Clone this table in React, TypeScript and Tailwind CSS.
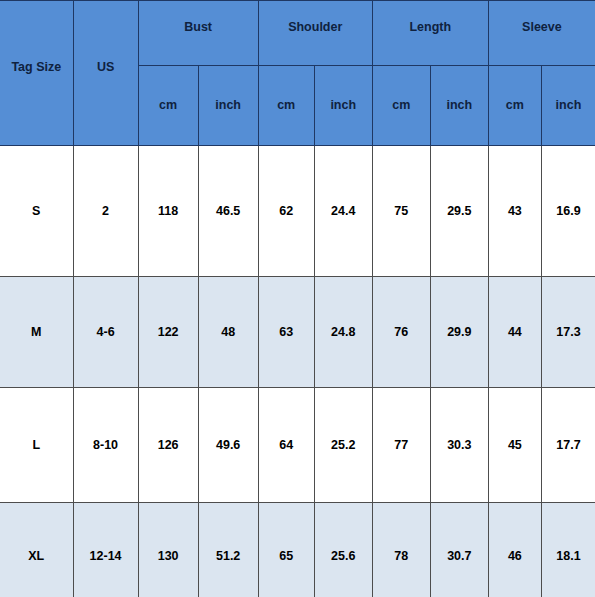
const rows = [
  { tag: 'S', us: '2', v: ['118', '46.5', '62', '24.4', '75', '29.5', '43', '16.9'], h: 'h-[131px]', pt: '' },
  { tag: 'M', us: '4-6', v: ['122', '48', '63', '24.8', '76', '29.9', '44', '17.3'], h: 'h-[111px]', pt: '' },
  { tag: 'L', us: '8-10', v: ['126', '49.6', '64', '25.2', '77', '30.3', '45', '17.7'], h: 'h-[115px]', pt: '' },
  { tag: 'XL', us: '12-14', v: ['130', '51.2', '65', '25.6', '78', '30.7', '46', '18.1'], h: 'h-[95px]', pt: 'pt-[12px]' },
]

const widths = ['w-[73px]', 'w-[65px]', 'w-[60px]', 'w-[60px]', 'w-[56px]', 'w-[58px]', 'w-[58px]', 'w-[58px]', 'w-[53px]', 'w-[54px]']
const groups = ['Bust', 'Shoulder', 'Length', 'Sleeve']

export default function App() {
  const head = 'border border-[#1f3864] bg-[#558ed5] text-[#0f2240] text-center align-middle'
  const cell = 'border border-[#4d4d4d] text-center align-middle text-black'

  return (
    <div className="w-[595px] h-[597px] overflow-hidden bg-white font-['Liberation_Sans',Arial,sans-serif] text-[12.5px] font-bold">
      <table className="border-collapse table-fixed w-[596px] border-t border-t-[#5a5a5a]">
        <colgroup>
          {widths.map((w, i) => (
            <col key={i} className={w} />
          ))}
        </colgroup>
        <thead>
          <tr className="h-[65px]">
            <th rowSpan={2} className={`${head} pb-[12px] border-l-0`}>Tag Size</th>
            <th rowSpan={2} className={`${head} pb-[12px]`}>US</th>
            {groups.map((g) => (
              <th key={g} colSpan={2} className={`${head} pb-[12px]`}>{g}</th>
            ))}
          </tr>
          <tr className="h-[80px]">
            {groups.flatMap((g) => [
              <th key={g + 'cm'} className={head}>cm</th>,
              <th key={g + 'in'} className={head}>inch</th>,
            ])}
          </tr>
        </thead>
        <tbody>
          {rows.map((r, i) => (
            <tr key={r.tag} className={`${r.h} ${i % 2 ? 'bg-[#dbe5f0]' : 'bg-white'}`}>
              <td className={`${cell} ${r.pt} border-l-0`}>{r.tag}</td>
              <td className={`${cell} ${r.pt}`}>{r.us}</td>
              {r.v.map((v, j) => (
                <td key={j} className={`${cell} ${r.pt}`}>{v}</td>
              ))}
            </tr>
          ))}
        </tbody>
      </table>
    </div>
  )
}
